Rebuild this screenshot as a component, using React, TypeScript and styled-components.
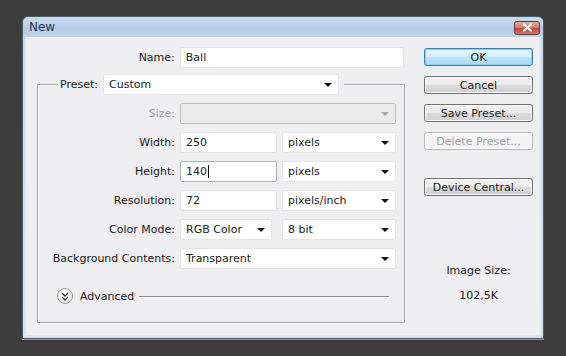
import styled, { createGlobalStyle } from "styled-components";

const GlobalStyle = createGlobalStyle`
  html, body {
    margin: 0;
    padding: 0;
    background: #3d3d3d;
  }
  body {
    width: 566px;
    height: 356px;
    overflow: hidden;
    font-family: "DejaVu Sans", Tahoma, sans-serif;
    font-size: 11px;
    color: #1b1b1b;
  }
`;

const Page = styled.div`
  padding: 16px 0 0 22px;
`;

const Dialog = styled.div`
  width: 520px;
  height: 321px;
  border: 1px solid #4f5a66;
  border-radius: 6px 6px 0 0;
  background: linear-gradient(#c9dcef, #b3cbe4 12px, #c4d8ec 22px, #d6e4f1);
  display: flex;
  flex-direction: column;
  box-shadow: 0 1px 0 #7fa2b8;
`;

const TitleBar = styled.div`
  height: 20px;
  display: flex;
  align-items: center;
  justify-content: space-between;
  padding: 0 3px 0 6px;
  font-family: "DejaVu Sans", Tahoma, sans-serif;
  font-size: 12px;
  color: #1d3556;
`;

const CloseButton = styled.div`
  width: 24px;
  height: 12px;
  margin-top: 1px;
  border: 1px solid #6e3b37;
  border-radius: 3px;
  background: linear-gradient(#e6b1a8, #d27d70 45%, #c0483b 55%, #d0786b);
  display: flex;
  align-items: center;
  justify-content: center;
`;

const Client = styled.div`
  flex: 1;
  margin: 0 2px 2px 2px;
  background: #efeef0;
  display: flex;
  border: 1px solid #dfe6ee;
  border-top-color: #f6f8fa;
`;

const LeftColumn = styled.div`
  width: 367px;
  padding: 9px 0 0 11px;
  display: flex;
  flex-direction: column;
`;

const Row = styled.div`
  display: flex;
  align-items: center;
  height: 21px;
  gap: 5px;
`;

const Label = styled.span<{ $width: number; $disabled?: boolean }>`
  width: ${(p) => p.$width}px;
  text-align: right;
  white-space: nowrap;
  color: ${(p) => (p.$disabled ? "#a4a4a4" : "#1b1b1b")};
`;

const TextBox = styled.div<{ $width: number; $focused?: boolean }>`
  width: ${(p) => p.$width}px;
  height: 21px;
  box-sizing: border-box;
  background: #fff;
  border: 1px solid ${(p) => (p.$focused ? "#aab4bf" : "#e2e2e4")};
  border-radius: 2px;
  padding: 0 5px;
  display: flex;
  align-items: center;
`;

const Caret = styled.span`
  display: inline-block;
  width: 1px;
  height: 13px;
  background: #111;
  margin-left: 1px;
`;

const Select = styled.div<{ $width: number; $disabled?: boolean; $offset?: number }>`
  width: ${(p) => p.$width}px;
  height: 21px;
  margin-left: ${(p) => p.$offset ?? 0}px;
  box-sizing: border-box;
  background: ${(p) => (p.$disabled ? "#ebebec" : "#fff")};
  border: 1px solid ${(p) => (p.$disabled ? "#bdbdbd" : "#e6e6e8")};
  border-radius: 2px;
  padding: 0 6px 0 5px;
  display: flex;
  align-items: center;
  justify-content: space-between;
  color: ${(p) => (p.$disabled ? "#a4a4a4" : "#1b1b1b")};
`;

const Arrow = styled.span<{ $disabled?: boolean }>`
  width: 0;
  height: 0;
  border-left: 4px solid transparent;
  border-right: 4px solid transparent;
  border-top: 4px solid ${(p) => (p.$disabled ? "#a8a8a8" : "#111")};
`;

const Group = styled.fieldset`
  margin: 6px 0 0 0;
  padding: 8px 6px 18px 0;
  width: 360px;
  border: 1px solid #a6a6a6;
  box-shadow: inset 1px 1px 0 #fff, 1px 1px 0 #fff;
  display: flex;
  flex-direction: column;
  gap: 8px;
  min-width: 0;
`;

const Legend = styled.legend`
  padding: 0 5px 0 0;
  margin-left: 20px;
  display: flex;
  align-items: center;
  gap: 5px;
  background: #efeef0;
`;

const AdvancedRow = styled.div`
  display: flex;
  align-items: center;
  margin-top: 11px;
  padding-left: 19px;
  padding-right: 9px;
  height: 16px;
  gap: 7px;
`;

const RoundToggle = styled.span`
  width: 14px;
  height: 14px;
  border-radius: 50%;
  border: 1px solid #9a9a9a;
  background: radial-gradient(circle at 50% 30%, #ffffff, #e2e2e2);
  display: flex;
  align-items: center;
  justify-content: center;
  flex-shrink: 0;
`;

const Rule = styled.span`
  flex: 1;
  height: 1px;
  background: #8e8e8e;
  margin-left: -2px;
  box-shadow: 0 1px 0 #fff;
`;

const RightColumn = styled.div`
  width: 109px;
  margin-left: 20px;
  padding-top: 10px;
  display: flex;
  flex-direction: column;
  gap: 10px;
`;

const Button = styled.div<{ $variant?: "default" | "disabled" }>`
  height: 18px;
  box-sizing: border-box;
  border-radius: 3px;
  display: flex;
  align-items: center;
  justify-content: center;
  white-space: nowrap;
  border: 1px solid
    ${(p) =>
      p.$variant === "default"
        ? "#3a7fa8"
        : p.$variant === "disabled"
        ? "#b6b9bc"
        : "#707070"};
  background: ${(p) =>
    p.$variant === "default"
      ? "linear-gradient(#e9f6fd, #d8effc 50%, #bde6fd 51%, #a7d9f5)"
      : p.$variant === "disabled"
      ? "#f4f4f4"
      : "linear-gradient(#f2f2f2, #ebebeb 50%, #dddddd 51%, #cfcfcf)"};
  color: ${(p) => (p.$variant === "disabled" ? "#a2a2a2" : "#1b1b1b")};
  box-shadow: ${(p) =>
    p.$variant === "default" ? "inset 0 0 0 1px #8ad3f5" : "inset 0 0 0 1px #fbfbfb"};
`;

const Spacer = styled.div<{ $h: number }>`
  height: ${(p) => p.$h}px;
  flex-shrink: 0;
`;

const SizeInfo = styled.div`
  display: flex;
  flex-direction: column;
  align-items: center;
  gap: 11px;
  line-height: 14px;
`;

const CloseGlyph = () => (
  <svg width="11" height="9" viewBox="0 0 11 9">
    <path d="M2 1.5 L9 7.5 M9 1.5 L2 7.5" stroke="#fff" strokeWidth="2.2" strokeLinecap="round" />
  </svg>
);

const ChevronsDown = () => (
  <svg width="8" height="9" viewBox="0 0 8 9">
    <path d="M1 1 L4 4 L7 1 M1 5 L4 8 L7 5" fill="none" stroke="#333" strokeWidth="1.3" />
  </svg>
);

const fields = [
  { label: "Width:", value: "250", unit: "pixels" },
  { label: "Height:", value: "140", unit: "pixels", focused: true },
  { label: "Resolution:", value: "72", unit: "pixels/inch" },
];

export default function App() {
  return (
    <Page>
      <GlobalStyle />
      <Dialog>
        <TitleBar>
          <span>New</span>
          <CloseButton>
            <CloseGlyph />
          </CloseButton>
        </TitleBar>
        <Client>
          <LeftColumn>
            <Row>
              <Label $width={139}>Name:</Label>
              <TextBox $width={226}>Ball</TextBox>
            </Row>
            <Group>
              <Legend>
                <Label $width={40}>Preset:</Label>
                <Select $width={236}>
                  Custom
                  <Arrow />
                </Select>
              </Legend>
              <Row>
                <Label $width={137} $disabled>
                  Size:
                </Label>
                <Select $width={216} $disabled>
                  <span />
                  <Arrow $disabled />
                </Select>
              </Row>
              {fields.map((f) => (
                <Row key={f.label}>
                  <Label $width={137}>{f.label}</Label>
                  <TextBox $width={97} $focused={f.focused}>
                    {f.value}
                    {f.focused && <Caret />}
                  </TextBox>
                  <Select $width={114}>
                    {f.unit}
                    <Arrow />
                  </Select>
                </Row>
              ))}
              <Row>
                <Label $width={137}>Color Mode:</Label>
                <Select $width={92}>
                  RGB Color
                  <Arrow />
                </Select>
                <Select $width={114} $offset={5}>
                  8 bit
                  <Arrow />
                </Select>
              </Row>
              <Row>
                <Label $width={137}>Background Contents:</Label>
                <Select $width={216}>
                  Transparent
                  <Arrow />
                </Select>
              </Row>
              <AdvancedRow>
                <RoundToggle>
                  <ChevronsDown />
                </RoundToggle>
                <span>Advanced</span>
                <Rule />
              </AdvancedRow>
            </Group>
          </LeftColumn>
          <RightColumn>
            <Button $variant="default">OK</Button>
            <Button>Cancel</Button>
            <Button>Save Preset...</Button>
            <Button $variant="disabled">Delete Preset...</Button>
            <Spacer $h={8} />
            <Button>Device Central...</Button>
            <Spacer $h={48} />
            <SizeInfo>
              <span>Image Size:</span>
              <span>102,5K</span>
            </SizeInfo>
          </RightColumn>
        </Client>
      </Dialog>
    </Page>
  );
}
